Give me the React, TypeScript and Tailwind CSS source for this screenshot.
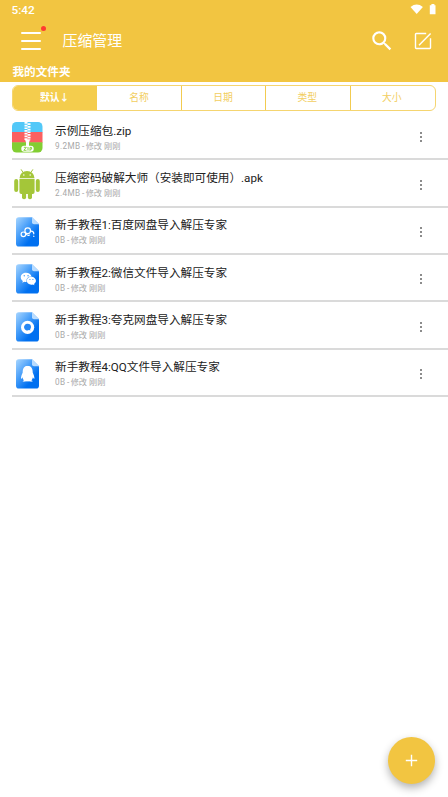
import React from "react";
import { MdSearch } from "react-icons/md";
import { FaQq, FaWeixin } from "react-icons/fa";

type FileKind = "zip" | "apk" | "baidu" | "wechat" | "quark" | "qq";

interface FileEntry {
  name: string;
  info: string;
  kind: FileKind;
}

const files: FileEntry[] = [
  { name: "示例压缩包.zip", info: "9.2MB", kind: "zip" },
  { name: "压缩密码破解大师（安装即可使用）.apk", info: "2.4MB", kind: "apk" },
  { name: "新手教程1:百度网盘导入解压专家", info: "0B", kind: "baidu" },
  { name: "新手教程2:微信文件导入解压专家", info: "0B", kind: "wechat" },
  { name: "新手教程3:夸克网盘导入解压专家", info: "0B", kind: "quark" },
  { name: "新手教程4:QQ文件导入解压专家", info: "0B", kind: "qq" },
];

const tabs = ["默认↓", "名称", "日期", "类型", "大小"];

const ZipIcon: React.FC = () => (
  <svg width="31" height="31" viewBox="0 0 31 31">
    <defs>
      <clipPath id="zip-clip">
        <rect width="30.5" height="30.5" rx="4.5" />
      </clipPath>
    </defs>
    <g clipPath="url(#zip-clip)">
      <rect width="31" height="10.5" fill="#52c8f8" />
      <rect y="10" width="31" height="10.8" fill="#fb6060" />
      <rect y="20.3" width="31" height="10.7" fill="#82ce32" />
    </g>
    {/* Zipper teeth */}
    <path d="M14 0v18" stroke="#fff" strokeWidth="3" strokeDasharray="1.7 1" />
    <path d="M17 1.3v17" stroke="#fff" strokeWidth="3" strokeDasharray="1.7 1" />
    <path d="M13 17.5h5l-1 3v4h-3v-4Z" fill="#fff" />
    <rect x="9.3" y="23.8" width="12.4" height="6" rx="2.8" fill="#fff" />
    <path
      d="M11.8 25.3h2.5l-2.5 3h2.7M16 25v3.6M18 28.9v-3.5h1.6v1.8H18"
      fill="none"
      stroke="#82ce32"
      strokeWidth="0.9"
    />
  </svg>
);

const AndroidIcon: React.FC = () => (
  <svg className="mr-px" width="26" height="31" viewBox="0 0 26 31" fill="#a4c639">
    <path d="M5.5 9.2a7.5 7.2 0 0 1 15 0Z" />
    <path
      d="M9 3.4L7.3 0.7M17 3.4L18.7 0.7"
      fill="none"
      stroke="#a4c639"
      strokeWidth="1"
      strokeLinecap="round"
    />
    <circle cx="9.8" cy="6" r="0.75" fill="#fff" />
    <circle cx="16.2" cy="6" r="0.75" fill="#fff" />
    <rect x="0.2" y="10" width="4" height="13" rx="2" />
    <rect x="21.8" y="10" width="4" height="13" rx="2" />
    <path d="M5.4 10.1H20.6V23a2 2 0 0 1-2 2H7.4a2 2 0 0 1-2-2Z" />
    <rect x="8" y="20" width="4.1" height="10.3" rx="2" />
    <rect x="13.9" y="20" width="4.1" height="10.3" rx="2" />
  </svg>
);

const DocIcon: React.FC<{ kind: FileKind }> = ({ kind }) => (
  <svg width="23" height="30" viewBox="0 0 23 30">
    <defs>
      <linearGradient id={`doc-${kind}`} x1="0" y1="0" x2="0.8" y2="0.85">
        <stop offset="0" stopColor="#a8d6ff" />
        <stop offset="0.5" stopColor="#409af9" />
        <stop offset="0.85" stopColor="#0070f0" />
      </linearGradient>
    </defs>
    <path
      d="M2.8 0.3H16L23 7.3V26.8A2.8 2.8 0 0 1 20.2 29.6H2.8A2.8 2.8 0 0 1 0 26.8V3.1A2.8 2.8 0 0 1 2.8 0.3Z"
      fill={`url(#doc-${kind})`}
    />
    <path d="M16 0.3L23 7.3H18A2 2 0 0 1 16 5.3Z" fill="#b9dcff" />
    {kind === "baidu" && (
      <g fill="none" stroke="#fff" strokeWidth="1.2" strokeLinecap="round">
        <circle cx="7.4" cy="17.3" r="2.3" />
        <circle cx="11.7" cy="13.7" r="2.8" />
        <path d="M9.3 15.8c1.2 2.2 2.6 3 4 2.3M15.2 14.2c1.6.1 2.6 1.2 2.6 2.6M17.8 19.2v.3" />
      </g>
    )}
    {kind === "wechat" && <FaWeixin x="4.3" y="7" width="14.5" height="15" color="#fff" />}
    {kind === "quark" && (
      <g>
        <circle cx="11.6" cy="15.3" r="6.6" fill="#fff" />
        <path
          d="M11.6 11.7a3.4 3.4 0 0 1 3.4 3.4c0 .9-.4 1.5-.9 2.1l.4 1.2-1.5-.3a3.4 3.4 0 1 1-1.4-6.4Z"
          fill="#2587f5"
        />
      </g>
    )}
    {kind === "qq" && <FaQq x="3.7" y="6.7" width="16" height="16.5" color="#fff" />}
  </svg>
);

const FileIcon: React.FC<{ kind: FileKind }> = ({ kind }) => {
  if (kind === "zip") return <ZipIcon />;
  if (kind === "apk") return <AndroidIcon />;
  return <DocIcon kind={kind} />;
};

const FileRow: React.FC<{ file: FileEntry }> = ({ file }) => (
  <div className="ml-3 flex h-[47.35px] items-center border-b-2 border-[#dadada] pt-[3px]">
    <div className="flex w-[31px] flex-shrink-0 items-center justify-center">
      <FileIcon kind={file.kind} />
    </div>
    <div className="ml-3 min-w-0 flex-1 pb-[1px]">
      <h3 className="h-[18px] whitespace-nowrap text-[11.63px] leading-[18px] text-[#212121]">
        {file.name}
      </h3>
      <p className="flex h-3 gap-[1.5px] whitespace-nowrap text-[8.2px] leading-3 text-[#a8a8a8]">
        <span className="tracking-[0.35px]">{file.info}</span>
        <span>-</span>
        <span>修改 刚刚</span>
      </p>
    </div>
    <button className="mr-[23px] flex h-6 w-2 flex-col items-center justify-center gap-[2px]">
      <span className="size-[2px] bg-[#8c8c8c]" />
      <span className="size-[2px] bg-[#8c8c8c]" />
      <span className="size-[2px] bg-[#8c8c8c]" />
    </button>
  </div>
);

const App: React.FC = () => {
  return (
    <div className="relative h-[797px] w-[448px] overflow-hidden bg-white font-[Roboto,'Noto_Sans_CJK_SC',sans-serif]">
      <header className="h-[82px] bg-[#f2c541] text-white">
        {/* Status bar */}
        <div className="flex h-5 items-center justify-between pl-[11.5px] pr-3">
          <span className="text-[11.8px] font-medium leading-5">5:42</span>
          <svg width="26" height="12" viewBox="0 0 26 12" fill="#fff">
            <path d="M0.5 3Q6.7-1.8 12.9 3L6.7 10Z" />
            <path d="M20.5 1.2H19.8V10.2H25.5V1.2H24.4V0H21.4V1.2Z" />
          </svg>
        </div>

        {/* Toolbar */}
        <div className="flex h-[42px] items-center">
          <button className="relative ml-[21px] flex w-5 flex-col gap-[6px]">
            <span className="h-[2px] w-full rounded-full bg-white" />
            <span className="h-[2px] w-full rounded-full bg-white" />
            <span className="h-[2px] w-full rounded-full bg-white" />
            <span className="absolute -right-[5px] -top-[6px] size-[5px] rounded-full bg-[#ff3b30]" />
          </button>
          <h1 className="ml-[21.5px] flex-1 text-[14.9px] leading-[22px]">压缩管理</h1>
          <MdSearch className="size-[26px]" />
          <svg
            className="ml-[19.5px] mr-4"
            width="18"
            height="18"
            viewBox="0 0 18 18"
            fill="none"
            stroke="#fff"
            strokeWidth="1.4"
          >
            <path d="M12.2 1.5H2.2a.7.7 0 0 0-.7.7v13.6a.7.7 0 0 0 .7.7h13.6a.7.7 0 0 0 .7-.7V6.2" />
            <path d="M5 13.2L16.6 1.6" />
          </svg>
        </div>

        <h2 className="ml-[12.5px] h-5 text-[11.6px] font-bold leading-5">我的文件夹</h2>
      </header>

      {/* Sort tabs */}
      <div className="mx-3 mt-[3px] flex h-[26px] overflow-hidden rounded-[6px] border border-[#f5d570]">
        {tabs.map((tab, i) => (
          <button
            key={tab}
            className={`w-1/5 pr-[1px] text-[9.8px] leading-6 ${
              i === 0
                ? "bg-[#f4cd4d] font-bold text-white"
                : i === 1
                  ? "-mr-px text-[#f2ce60]"
                  : "border-l border-[#f2cb50] text-[#f2ce60]"
            }`}
          >
            {tab}
          </button>
        ))}
      </div>

      <main className="mt-[2px]">
        {files.map((file) => (
          <FileRow key={file.name} file={file} />
        ))}
      </main>

      {/* Add button */}
      <button className="absolute bottom-[13px] right-[13px] flex size-[47px] items-center justify-center rounded-full bg-[#f2c541] shadow-[0_4px_8px_rgba(0,0,0,0.3)]">
        <svg width="13" height="13" viewBox="0 0 13 13" stroke="#fff" strokeWidth="1.4">
          <path d="M6.5 0.8v11.4M0.8 6.5h11.4" />
        </svg>
      </button>
    </div>
  );
};

export default App;
